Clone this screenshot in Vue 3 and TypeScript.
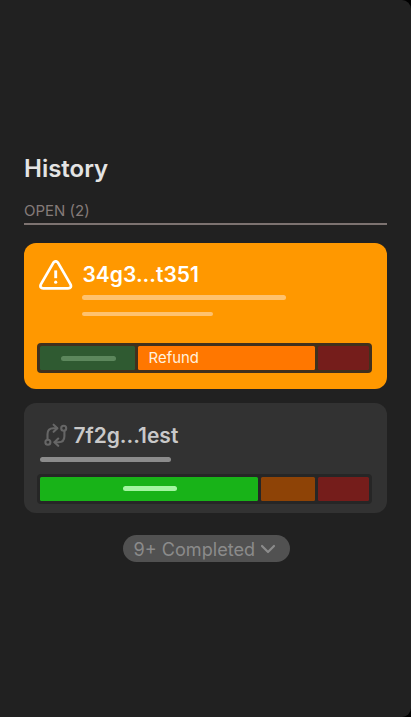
<script setup lang="ts">
interface Segment {
  width: number
  tone: string
  label?: string
  line?: number
}

const refundSegments: Segment[] = [
  { width: 95, tone: 'forest', line: 54.5 },
  { width: 177, tone: 'orange', label: 'Refund' },
  { width: 51, tone: 'maroon' },
]

const activeSegments: Segment[] = [
  { width: 218, tone: 'green', line: 54 },
  { width: 54, tone: 'brown' },
  { width: 51, tone: 'maroon' },
]
</script>

<template>
  <main class="panel">
    <h1 class="title">History</h1>
    <div class="section">OPEN (2)</div>

    <article class="card warning">
      <div class="head">
        <svg class="alert" width="34" height="30" viewBox="0 0 34 30" fill="none" stroke="#fff" stroke-width="2.7" stroke-linejoin="round" stroke-linecap="round">
          <path d="M14.3 2.8 L2 24.2 C.7 26.7 1.8 28.3 4.3 28.3 H29.1 C31.6 28.3 32.7 26.7 31.4 24.2 L19.1 2.8 C17.9 .8 15.5 .8 14.3 2.8 Z" />
          <path d="M16.7 10.4 V18.2" stroke-width="2.9" stroke-linecap="butt" />
          <circle cx="16.7" cy="22.2" r="1.6" fill="#fff" stroke="none" />
        </svg>
        <div class="info">
          <h2 class="name">34g3...t351</h2>
          <span class="line long"></span>
          <span class="line short"></span>
        </div>
      </div>
      <div class="track">
        <div v-for="(s, i) in refundSegments" :key="i" class="segment" :class="s.tone" :style="{ width: s.width + 'px' }">
          <span v-if="s.label" class="label">{{ s.label }}</span>
          <span v-if="s.line" class="mark" :style="{ width: s.line + 'px' }"></span>
        </div>
      </div>
    </article>

    <article class="card active">
      <div class="head">
        <svg class="swap" width="24" height="24" viewBox="0 0 24 24" fill="none" stroke="#666" stroke-width="2.1" stroke-linecap="round" stroke-linejoin="round">
          <circle cx="3.9" cy="19.2" r="2.5" />
          <circle cx="19.7" cy="5.3" r="2.5" />
          <path d="M3.5 16.5 V11.2 Q3.5 5.2 9.3 5.2 H13" />
          <path d="M9.6 1.7 L13.4 5.2 L9.6 8.8" />
          <path d="M20.4 8 V13.2 Q20.4 19.2 14.5 19.2 H10.6" />
          <path d="M14.2 15.6 L10.5 19.2 L14.2 22.8" />
        </svg>
        <h2 class="name">7f2g...1est</h2>
      </div>
      <span class="line"></span>
      <div class="track">
        <div v-for="(s, i) in activeSegments" :key="i" class="segment" :class="s.tone" :style="{ width: s.width + 'px' }">
          <span v-if="s.line" class="mark" :style="{ width: s.line + 'px' }"></span>
        </div>
      </div>
    </article>

    <button class="completed">
      <span>9+ Completed</span>
      <svg width="16" height="10" viewBox="0 0 16 10" fill="none" stroke="#8b8b8b" stroke-width="2.2" stroke-linecap="round" stroke-linejoin="round">
        <path d="M2 2 L8 8 L14 2" />
      </svg>
    </button>
  </main>
</template>

<style>
body {
  background: #000;
}
</style>

<style scoped>
.panel {
  box-sizing: border-box;
  width: 411px;
  height: 717px;
  padding: 154px 24px 0;
  display: flex;
  flex-direction: column;
  background: #212121;
  border-radius: 0 9px 9px 0;
  font-family: Inter, sans-serif;
  overflow: hidden;
}

.title {
  margin: 0;
  font-size: 24px;
  line-height: 30px;
  font-weight: 600;
  color: #e4e4e4;
}

.section {
  box-sizing: border-box;
  height: 41px;
  padding-top: 17px;
  border-bottom: 2px solid #7d7371;
  font-size: 15px;
  line-height: 20px;
  color: #857b79;
}

.card {
  box-sizing: border-box;
  border-radius: 12px;
  flex: none;
}

.warning {
  height: 145.5px;
  margin-top: 18px;
  padding: 17px 13.3px 0;
  background: #ff9800;
}

.active {
  height: 109.6px;
  margin-top: 14.7px;
  padding: 17px 13.3px 0;
  background: #323232;
}

.head {
  display: flex;
}

.warning .head {
  height: 83.2px;
}

.alert {
  margin: 0 9.9px 0 1.3px;
  flex: none;
}

.name {
  margin: 0;
  padding-top: 1px;
  font-size: 21px;
  line-height: 28px;
  font-weight: 600;
  white-space: nowrap;
}

.warning .name {
  color: #fff;
}

.info {
  display: flex;
  flex-direction: column;
}

.line {
  display: block;
  height: 4.6px;
  border-radius: 3px;
  background: #ffc26e;
}

.long {
  width: 204px;
  margin-top: 6.2px;
}

.short {
  width: 130.7px;
  margin-top: 12px;
}

.active .head {
  height: 37px;
}

.active .line {
  width: 130.7px;
  margin-left: 3px;
  background: #8c8c8c;
}

.active .name {
  padding-top: 2px;
  color: #c9c9c9;
}

.swap {
  margin: 3px 5.7px 0 6.4px;
  flex: none;
}

.track {
  box-sizing: border-box;
  width: 335px;
  height: 30px;
  padding: 3px;
  display: flex;
  gap: 3px;
  border-radius: 4px;
  background: #40301d;
}

.active .track {
  margin-top: 11.9px;
  background: #262626;
}

.segment {
  display: flex;
  flex: none;
  align-items: center;
  justify-content: center;
  border-radius: 1.5px;
}

.forest { background: #2f5a31; }
.orange { background: #ff7700; justify-content: flex-start; }
.maroon { background: #751d1b; }
.green { background: #18b318; }
.brown { background: #8e4306; }

.mark {
  height: 4.6px;
  margin-left: 2px;
  border-radius: 3px;
  background: #a3f5a1;
}

.forest .mark {
  height: 5px;
  margin: 1px 0 0 1px;
  background: #5c875c;
}

.label {
  padding: 0 0 1px 10.3px;
  font-size: 14.9px;
  line-height: 20px;
  color: #fff0df;
}

.completed {
  box-sizing: border-box;
  align-self: center;
  width: 167px;
  height: 27.5px;
  margin: 22.2px 0 0 1px;
  padding: 0 13.5px 0 11px;
  display: flex;
  align-items: center;
  justify-content: space-between;
  border: 0;
  border-radius: 14px;
  background: #515151;
  color: #8b8b8b;
  font: 400 18.1px/26px Inter, sans-serif;
  white-space: nowrap;
}
</style>
